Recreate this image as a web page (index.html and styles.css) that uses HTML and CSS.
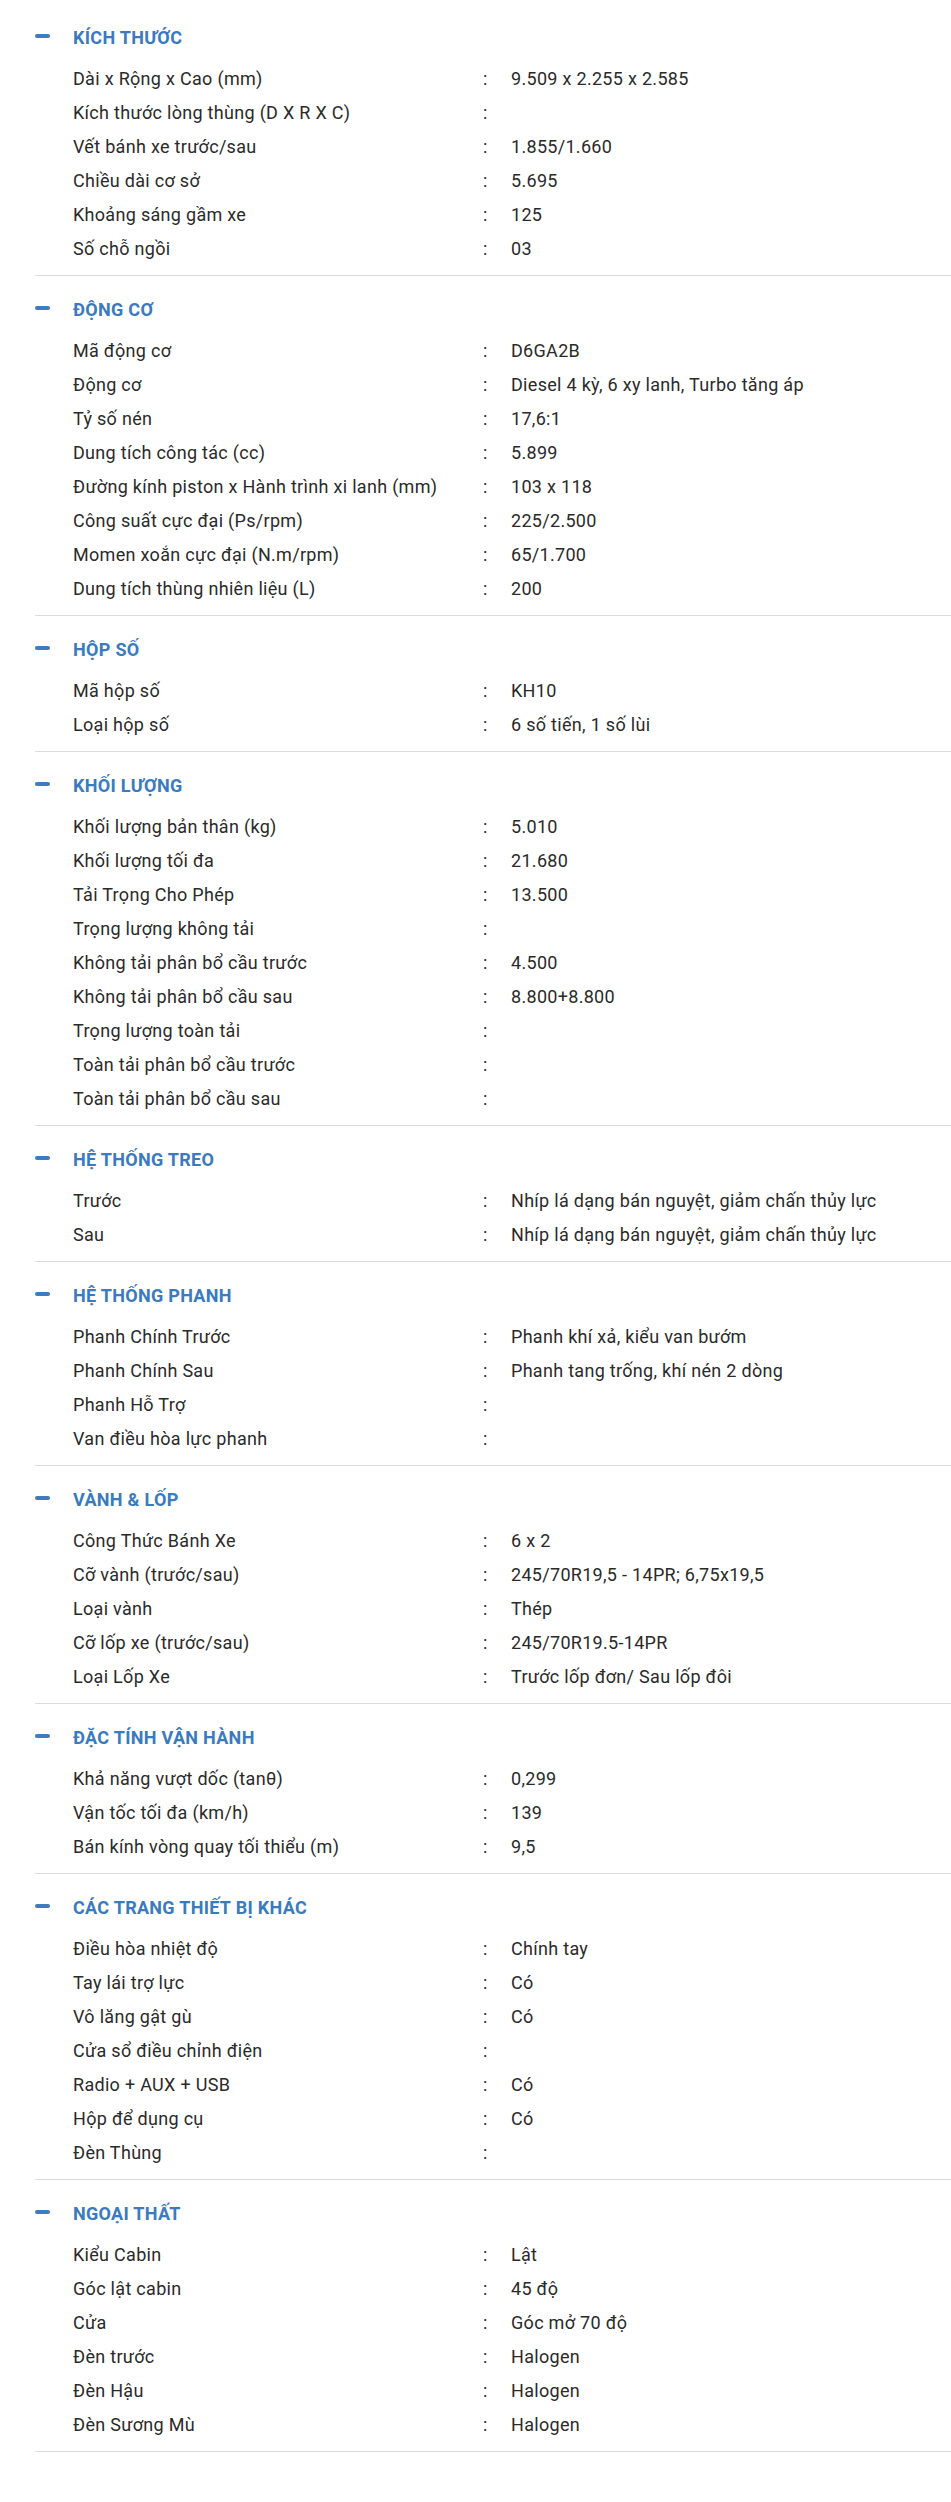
FILE: index.html
```html
<!DOCTYPE html>
<html lang="vi">
<head>
<meta charset="utf-8">
<title>Thông số kỹ thuật</title>
<link rel="stylesheet" href="styles.css">
</head>
<body>
<div class="specs">

<section class="spec">
<h3 class="spec-title"><span class="minus"></span>KÍCH THƯỚC</h3>
<div class="rows">
<div class="row"><span class="k">Dài x Rộng x Cao (mm)</span><span class="c">:</span><span class="v">9.509 x 2.255 x 2.585</span></div>
<div class="row"><span class="k">Kích thước lòng thùng (D X R X C)</span><span class="c">:</span><span class="v"></span></div>
<div class="row"><span class="k">Vết bánh xe trước/sau</span><span class="c">:</span><span class="v">1.855/1.660</span></div>
<div class="row"><span class="k">Chiều dài cơ sở</span><span class="c">:</span><span class="v">5.695</span></div>
<div class="row"><span class="k">Khoảng sáng gầm xe</span><span class="c">:</span><span class="v">125</span></div>
<div class="row"><span class="k">Số chỗ ngồi</span><span class="c">:</span><span class="v">03</span></div>
</div>
</section>

<section class="spec">
<h3 class="spec-title"><span class="minus"></span>ĐỘNG CƠ</h3>
<div class="rows">
<div class="row"><span class="k">Mã động cơ</span><span class="c">:</span><span class="v">D6GA2B</span></div>
<div class="row"><span class="k">Động cơ</span><span class="c">:</span><span class="v">Diesel 4 kỳ, 6 xy lanh, Turbo tăng áp</span></div>
<div class="row"><span class="k">Tỷ số nén</span><span class="c">:</span><span class="v">17,6:1</span></div>
<div class="row"><span class="k">Dung tích công tác (cc)</span><span class="c">:</span><span class="v">5.899</span></div>
<div class="row"><span class="k">Đường kính piston x Hành trình xi lanh (mm)</span><span class="c">:</span><span class="v">103 x 118</span></div>
<div class="row"><span class="k">Công suất cực đại (Ps/rpm)</span><span class="c">:</span><span class="v">225/2.500</span></div>
<div class="row"><span class="k">Momen xoắn cực đại (N.m/rpm)</span><span class="c">:</span><span class="v">65/1.700</span></div>
<div class="row"><span class="k">Dung tích thùng nhiên liệu (L)</span><span class="c">:</span><span class="v">200</span></div>
</div>
</section>

<section class="spec">
<h3 class="spec-title"><span class="minus"></span>HỘP SỐ</h3>
<div class="rows">
<div class="row"><span class="k">Mã hộp số</span><span class="c">:</span><span class="v">KH10</span></div>
<div class="row"><span class="k">Loại hộp số</span><span class="c">:</span><span class="v">6 số tiến, 1 số lùi</span></div>
</div>
</section>

<section class="spec">
<h3 class="spec-title"><span class="minus"></span>KHỐI LƯỢNG</h3>
<div class="rows">
<div class="row"><span class="k">Khối lượng bản thân (kg)</span><span class="c">:</span><span class="v">5.010</span></div>
<div class="row"><span class="k">Khối lượng tối đa</span><span class="c">:</span><span class="v">21.680</span></div>
<div class="row"><span class="k">Tải Trọng Cho Phép</span><span class="c">:</span><span class="v">13.500</span></div>
<div class="row"><span class="k">Trọng lượng không tải</span><span class="c">:</span><span class="v"></span></div>
<div class="row"><span class="k">Không tải phân bổ cầu trước</span><span class="c">:</span><span class="v">4.500</span></div>
<div class="row"><span class="k">Không tải phân bổ cầu sau</span><span class="c">:</span><span class="v">8.800+8.800</span></div>
<div class="row"><span class="k">Trọng lượng toàn tải</span><span class="c">:</span><span class="v"></span></div>
<div class="row"><span class="k">Toàn tải phân bổ cầu trước</span><span class="c">:</span><span class="v"></span></div>
<div class="row"><span class="k">Toàn tải phân bổ cầu sau</span><span class="c">:</span><span class="v"></span></div>
</div>
</section>

<section class="spec">
<h3 class="spec-title"><span class="minus"></span>HỆ THỐNG TREO</h3>
<div class="rows">
<div class="row"><span class="k">Trước</span><span class="c">:</span><span class="v">Nhíp lá dạng bán nguyệt, giảm chấn thủy lực</span></div>
<div class="row"><span class="k">Sau</span><span class="c">:</span><span class="v">Nhíp lá dạng bán nguyệt, giảm chấn thủy lực</span></div>
</div>
</section>

<section class="spec">
<h3 class="spec-title"><span class="minus"></span>HỆ THỐNG PHANH</h3>
<div class="rows">
<div class="row"><span class="k">Phanh Chính Trước</span><span class="c">:</span><span class="v">Phanh khí xả, kiểu van bướm</span></div>
<div class="row"><span class="k">Phanh Chính Sau</span><span class="c">:</span><span class="v">Phanh tang trống, khí nén 2 dòng</span></div>
<div class="row"><span class="k">Phanh Hỗ Trợ</span><span class="c">:</span><span class="v"></span></div>
<div class="row"><span class="k">Van điều hòa lực phanh</span><span class="c">:</span><span class="v"></span></div>
</div>
</section>

<section class="spec">
<h3 class="spec-title"><span class="minus"></span>VÀNH &amp; LỐP</h3>
<div class="rows">
<div class="row"><span class="k">Công Thức Bánh Xe</span><span class="c">:</span><span class="v">6 x 2</span></div>
<div class="row"><span class="k">Cỡ vành (trước/sau)</span><span class="c">:</span><span class="v">245/70R19,5 - 14PR; 6,75x19,5</span></div>
<div class="row"><span class="k">Loại vành</span><span class="c">:</span><span class="v">Thép</span></div>
<div class="row"><span class="k">Cỡ lốp xe (trước/sau)</span><span class="c">:</span><span class="v">245/70R19.5-14PR</span></div>
<div class="row"><span class="k">Loại Lốp Xe</span><span class="c">:</span><span class="v">Trước lốp đơn/ Sau lốp đôi</span></div>
</div>
</section>

<section class="spec">
<h3 class="spec-title"><span class="minus"></span>ĐẶC TÍNH VẬN HÀNH</h3>
<div class="rows">
<div class="row"><span class="k">Khả năng vượt dốc (tanθ)</span><span class="c">:</span><span class="v">0,299</span></div>
<div class="row"><span class="k">Vận tốc tối đa (km/h)</span><span class="c">:</span><span class="v">139</span></div>
<div class="row"><span class="k">Bán kính vòng quay tối thiểu (m)</span><span class="c">:</span><span class="v">9,5</span></div>
</div>
</section>

<section class="spec">
<h3 class="spec-title"><span class="minus"></span>CÁC TRANG THIẾT BỊ KHÁC</h3>
<div class="rows">
<div class="row"><span class="k">Điều hòa nhiệt độ</span><span class="c">:</span><span class="v">Chính tay</span></div>
<div class="row"><span class="k">Tay lái trợ lực</span><span class="c">:</span><span class="v">Có</span></div>
<div class="row"><span class="k">Vô lăng gật gù</span><span class="c">:</span><span class="v">Có</span></div>
<div class="row"><span class="k">Cửa sổ điều chỉnh điện</span><span class="c">:</span><span class="v"></span></div>
<div class="row"><span class="k">Radio + AUX + USB</span><span class="c">:</span><span class="v">Có</span></div>
<div class="row"><span class="k">Hộp để dụng cụ</span><span class="c">:</span><span class="v">Có</span></div>
<div class="row"><span class="k">Đèn Thùng</span><span class="c">:</span><span class="v"></span></div>
</div>
</section>

<section class="spec">
<h3 class="spec-title"><span class="minus"></span>NGOẠI THẤT</h3>
<div class="rows">
<div class="row"><span class="k">Kiểu Cabin</span><span class="c">:</span><span class="v">Lật</span></div>
<div class="row"><span class="k">Góc lật cabin</span><span class="c">:</span><span class="v">45 độ</span></div>
<div class="row"><span class="k">Cửa</span><span class="c">:</span><span class="v">Góc mở 70 độ</span></div>
<div class="row"><span class="k">Đèn trước</span><span class="c">:</span><span class="v">Halogen</span></div>
<div class="row"><span class="k">Đèn Hậu</span><span class="c">:</span><span class="v">Halogen</span></div>
<div class="row"><span class="k">Đèn Sương Mù</span><span class="c">:</span><span class="v">Halogen</span></div>
</div>
</section>

</div>
</body>
</html>
```

FILE: styles.css
```css
html, body {
  margin: 0;
  padding: 0;
  background: #ffffff;
}

body {
  font-family: Roboto, "Liberation Sans", sans-serif;
  color: #2a2a2a;
  font-size: 18px;
  letter-spacing: 0.3px;
}

.specs {
  padding-top: 4px;
  margin-left: 35px;
}

.spec {
  padding-top: 16px;
  padding-bottom: 9px;
  border-bottom: 1px solid #dcdcdc;
}

.spec-title {
  margin: 0 0 8px 0;
  display: flex;
  align-items: center;
  height: 34px;
  font-size: 18px;
  font-weight: 700;
  color: #3a7abf;
}

.minus {
  display: block;
  width: 15px;
  height: 4px;
  border-radius: 2px;
  background: #3d7cc0;
  margin-right: 23px;
  margin-top: -3px;
}

.row {
  display: grid;
  grid-template-columns: 409px 29px 1fr;
  height: 34px;
  line-height: 34px;
  padding-left: 38px;
}

.c {
  padding-left: 1px;
}
```
